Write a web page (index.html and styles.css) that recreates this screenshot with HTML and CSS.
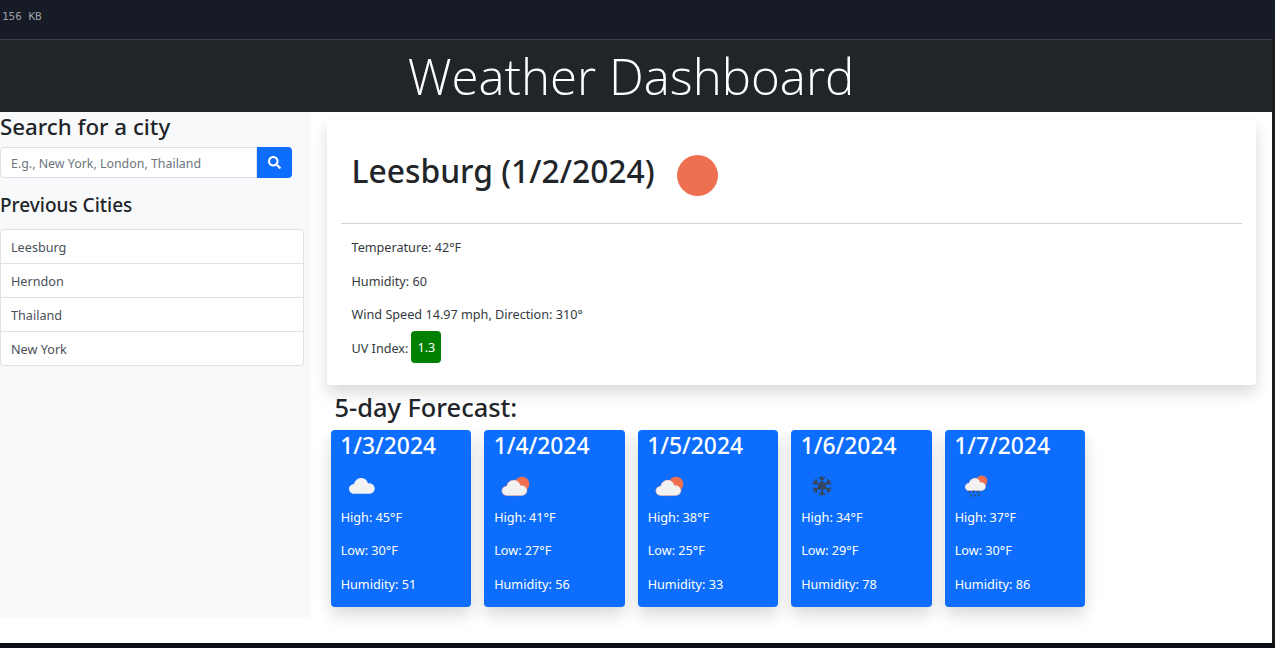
FILE: index.html
```html
<!DOCTYPE html>
<html>
<head>
  <title>Weather Dashboard</title>
  <link rel="stylesheet" href="styles.css">
</head>
<body>
  <svg class="icon-defs" width="0" height="0">
    <defs>
      <path id="cloudShape" d="M8 26c-4 0-7-3-7-6.500s3-6.300 6.500-6.500C8.500 8.500 12.500 5 17 5c4.500 0 8 2.800 9 7 .5-.1 1-.1 1.500-.1 4 0 7.500 3.200 7.500 7.100S31.500 26 27.500 26z"/>
      <g id="flakeArm">
        <path d="M0 0v-9.500M-2.600-8.500 0-6l2.600-2.500"/>
      </g>
    </defs>
  </svg>

  <div class="size-bar">156 KB</div>

  <div class="shell">
    <div class="page">
      <header class="site-header">
        <h1>Weather Dashboard</h1>
      </header>

      <div class="main-row">
        <aside class="sidebar">
          <h2 class="search-title">Search for a city</h2>
          <form class="search-form">
            <input class="search-input" type="text" placeholder="E.g., New York, London, Thailand">
            <button class="search-btn" type="button" aria-label="Search">
              <svg viewBox="0 0 512 512" width="13" height="13"><path fill="#fff" d="M505 442.700L405.300 343c-4.500-4.500-10.600-7-17-7H372c27.600-35.300 44-79.700 44-128C416 93.100 322.900 0 208 0S0 93.100 0 208s93.100 208 208 208c48.300 0 92.700-16.400 128-44v16.300c0 6.400 2.500 12.500 7 17l99.700 99.700c9.400 9.400 24.600 9.400 33.900 0l28.300-28.300c9.400-9.400 9.400-24.600.1-34zM208 336c-70.700 0-128-57.200-128-128 0-70.700 57.200-128 128-128 70.700 0 128 57.200 128 128 0 70.700-57.200 128-128 128z"/></svg>
            </button>
          </form>
          <h3 class="prev-title">Previous Cities</h3>
          <ul class="city-list">
            <li>Leesburg</li>
            <li>Herndon</li>
            <li>Thailand</li>
            <li>New York</li>
          </ul>
        </aside>

        <main class="content">
          <section class="today-card">
            <div class="today-head">
              <h2>Leesburg (1/2/2024)</h2>
              <span class="sun"></span>
            </div>
            <hr>
            <div class="today-body">
              <p>Temperature: 42°F</p>
              <p>Humidity: 60</p>
              <p>Wind Speed 14.97 mph, Direction: 310°</p>
              <p class="uv-row">UV Index: <span class="uv-badge">1.3</span></p>
            </div>
          </section>

          <h3 class="forecast-title">5-day Forecast:</h3>
          <div class="forecast-row">
            <div class="day-card">
              <h4>1/3/2024</h4>
              <svg class="day-icon" viewBox="0 -4 50 41"><use href="#cloudShape" transform="translate(7.300 10.200) scale(.755)" fill="#f2f2f2"/></svg>
              <p>High: 45°F</p>
              <p>Low: 30°F</p>
              <p>Humidity: 51</p>
            </div>
            <div class="day-card">
              <h4>1/4/2024</h4>
              <svg class="day-icon" viewBox="0 -4 50 41"><circle cx="28" cy="20" r="7.300" fill="#ef7050"/><use href="#cloudShape" transform="translate(7 12.300) scale(.745)" fill="#f2f2f2" stroke="#ef7050" stroke-width=".5"/></svg>
              <p>High: 41°F</p>
              <p>Low: 27°F</p>
              <p>Humidity: 56</p>
            </div>
            <div class="day-card">
              <h4>1/5/2024</h4>
              <svg class="day-icon" viewBox="0 -4 50 41"><circle cx="28" cy="20" r="7.300" fill="#ef7050"/><use href="#cloudShape" transform="translate(7 12.300) scale(.745)" fill="#f2f2f2" stroke="#ef7050" stroke-width=".5"/></svg>
              <p>High: 38°F</p>
              <p>Low: 25°F</p>
              <p>Humidity: 33</p>
            </div>
            <div class="day-card">
              <h4>1/6/2024</h4>
              <svg class="day-icon" viewBox="0 -4 50 41">
                <g transform="translate(21 22)" stroke="#3a4352" stroke-width="1.500" stroke-linecap="round" fill="none">
                  <use href="#flakeArm"/>
                  <use href="#flakeArm" transform="rotate(60)"/>
                  <use href="#flakeArm" transform="rotate(120)"/>
                  <use href="#flakeArm" transform="rotate(180)"/>
                  <use href="#flakeArm" transform="rotate(240)"/>
                  <use href="#flakeArm" transform="rotate(300)"/>
                  <circle r="3.500"/>
                </g>
              </svg>
              <p>High: 34°F</p>
              <p>Low: 29°F</p>
              <p>Humidity: 78</p>
            </div>
            <div class="day-card">
              <h4>1/7/2024</h4>
              <svg class="day-icon" viewBox="0 -4 50 41">
                <circle cx="26.700" cy="17" r="5.600" fill="#ef7050"/>
                <use href="#cloudShape" transform="translate(9.400 11) scale(.61)" fill="#f2f2f2" stroke="#ef7050" stroke-width=".4"/>
                <path d="M14.500 27.500v1M18.500 27v1M22.500 27.500v1M16 31v1M20 31v1M24 30.500v1" stroke="#3a4352" stroke-width="1.300" stroke-linecap="round"/>
              </svg>
              <p>High: 37°F</p>
              <p>Low: 30°F</p>
              <p>Humidity: 86</p>
            </div>
          </div>
        </main>
      </div>
    </div>
    <div class="edge-strip"></div>
  </div>
</body>
</html>
```

FILE: styles.css
```css
* {
  box-sizing: border-box;
}

html,
body {
  height: 100%;
}

body {
  margin: 0;
  background-color: #0d1117;
  color: #212529;
  font-family: "Noto Sans", "Open Sans", sans-serif;
  font-size: 12.650px;
  overflow: hidden;
}

.icon-defs {
  position: absolute;
}

.size-bar {
  height: 39px;
  padding: 11px 0 0 2px;
  background-color: #161b26;
  color: #9a9fa6;
  font-family: "DejaVu Sans Mono", monospace;
  font-size: 11px;
  line-height: 12px;
}

.shell {
  display: flex;
  height: 604px;
}

.page {
  width: 1272px;
  background-color: #fff;
}

.edge-strip {
  flex: 1;
  background-color: #1b1b1b;
}

.site-header {
  height: 73px;
  padding-right: 10px;
  background-color: #212529;
  border-top: 1px solid #3a3f44;
  text-align: center;
}

.site-header h1 {
  margin: 0;
  color: #fff;
  font-family: "Open Sans", sans-serif;
  font-size: 49.200px;
  font-weight: 300;
  line-height: 72px;
}

.main-row {
  display: flex;
}

.sidebar {
  width: 311px;
  height: 505px;
  background-color: #f8f9fa;
}

.search-title {
  margin: 0;
  font-size: 22.300px;
  font-weight: 500;
  line-height: 30px;
}

.search-form {
  display: flex;
  width: 292px;
  margin-top: 5px;
}

.search-input {
  flex: 1;
  min-width: 0;
  height: 31px;
  padding: 1px 9px 0 10px;
  background-color: #fff;
  border: 1px solid #dee2e6;
  border-radius: 4px 0 0 4px;
  font-family: inherit;
  font-size: 12.400px;
}

.search-input::placeholder {
  color: #6c757d;
}

.search-btn {
  display: flex;
  align-items: center;
  justify-content: center;
  width: 35px;
  height: 31px;
  padding: 0;
  background-color: #0d6efd;
  border: 0;
  border-radius: 0 4px 4px 0;
}

.prev-title {
  margin: 14px 0 11px;
  font-size: 19px;
  font-weight: 500;
  line-height: 26px;
}

.city-list {
  width: 304px;
  margin: 0;
  padding: 0;
  background-color: #fff;
  border: 1px solid #dee2e6;
  border-radius: 4px;
  list-style: none;
}

.city-list li {
  height: 34px;
  padding-left: 10px;
  color: #495057;
  line-height: 35px;
  border-bottom: 1px solid #dee2e6;
}

.city-list li:last-child {
  height: 33px;
  border-bottom: 0;
}

.content {
  flex: 1;
  padding: 8px 16px 0;
}

.today-card {
  height: 265px;
  background-color: #fff;
  border-radius: 4px;
  box-shadow: 0 8px 16px rgba(0, 0, 0, .15);
}

.today-head {
  display: flex;
  align-items: center;
  gap: 22px;
  height: 103px;
  padding: 0 0 0 24.500px;
}

.today-head h2 {
  margin: 0 0 1px;
  font-size: 31.800px;
  font-weight: 500;
  line-height: 40px;
}

.sun {
  width: 41px;
  height: 41px;
  margin-top: 7px;
  background-color: #ef7050;
  border-radius: 50%;
}

.today-card hr {
  height: 1px;
  margin: 0 14px;
  background-color: #d3d4d5;
  border: 0;
}

.today-body {
  padding: 7px 24.500px 0;
}

.today-body p {
  height: 33.500px;
  margin: 0;
  color: #343a40;
  line-height: 33.500px;
}

.today-body .uv-row {
  display: flex;
  align-items: center;
  gap: 3px;
}

.uv-badge {
  width: 30px;
  height: 32px;
  margin-top: -3px;
  background-color: #008000;
  border-radius: 4px;
  color: #fff;
  line-height: 32px;
  text-align: center;
}

.forecast-title {
  height: 45px;
  margin: 0;
  padding: 4px 0 0 7.500px;
  font-size: 25.400px;
  font-weight: 500;
  line-height: 36px;
}

.forecast-row {
  display: flex;
  gap: 13px;
  padding: 0 0 0 3.700px;
}

.day-card {
  width: 140.500px;
  height: 177px;
  padding: 0 10px;
  background-color: #0d6efd;
  border-radius: 4px;
  box-shadow: 0 8px 16px rgba(0, 0, 0, .15);
  color: #fff;
}

.day-card h4 {
  height: 30px;
  margin: 0 0 0 -.5px;
  font-size: 22.800px;
  font-weight: 500;
  line-height: 32px;
}

.day-icon {
  display: block;
  width: 50px;
  height: 41px;
}

.day-card p {
  height: 33.400px;
  margin: 0;
  line-height: 33.400px;
}
```
